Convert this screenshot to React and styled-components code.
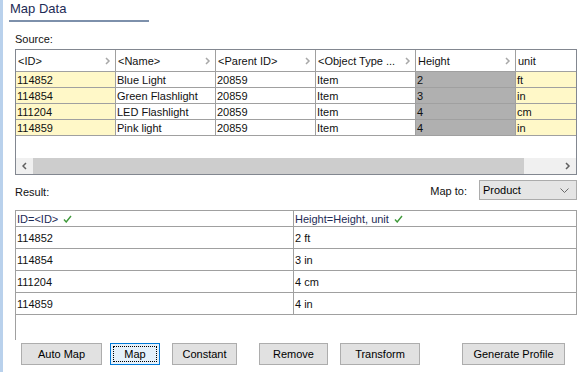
import { Fragment } from "react";
import styled, { createGlobalStyle } from "styled-components";

const GlobalStyle = createGlobalStyle`
  html, body {
    margin: 0;
    padding: 0;
    background: #ffffff;
  }
  body {
    font-family: "Liberation Sans", Arial, sans-serif;
    font-size: 11px;
    color: #000;
  }
`;

const Page = styled.div`
  display: flex;
  width: 578px;
  height: 372px;
  overflow: hidden;
`;

const Strip = styled.div`
  width: 3px;
  background: #b9d1ec;
  flex-shrink: 0;
`;

const Main = styled.div`
  flex: 1;
  display: flex;
  flex-direction: column;
  padding: 0 1px 0 6px;
  min-width: 0;
`;

const Title = styled.div`
  width: 140px;
  height: 22px;
  line-height: 18px;
  font-size: 13px;
  color: #1d2b55;
  border-bottom: 2px solid #7d90ab;
  padding-left: 1px;
  box-sizing: border-box;
`;

const Body = styled.div`
  display: flex;
  flex-direction: column;
  padding-left: 6px;
`;

const Label = styled.div`
  height: 16px;
  line-height: 16px;
  margin-top: ${(p) => p.$mt || 0}px;
  color: #111;
`;

const SourceGrid = styled.div`
  margin-top: 2px;
  border: 1px solid #828790;
  height: 126px;
  box-sizing: border-box;
  display: flex;
  flex-direction: column;
  overflow: hidden;
`;

const Row = styled.div`
  display: grid;
  grid-template-columns: repeat(5, 100px) 1fr;
  height: ${(p) => p.$h}px;
  flex-shrink: 0;
`;

const HeadCell = styled.div`
  display: flex;
  align-items: center;
  justify-content: space-between;
  padding: 0 4px 0 2px;
  border-right: 1px solid #a0a0a0;
  border-bottom: 1px solid #a0a0a0;
  white-space: nowrap;
  overflow: hidden;
  color: #111;
  &:last-child {
    border-right: none;
  }
`;

const Cell = styled.div`
  display: flex;
  align-items: center;
  padding-left: 1px;
  background: ${(p) => p.$bg || "#ffffff"};
  border-right: 1px solid #a0a0a0;
  border-bottom: 1px solid #a0a0a0;
  white-space: nowrap;
  overflow: hidden;
  color: #111;
  &:last-child {
    border-right: none;
  }
`;

const Filler = styled.div`
  flex: 1;
`;

const ScrollBar = styled.div`
  height: 16px;
  display: flex;
  background: #f0f0f0;
  flex-shrink: 0;
`;

const ScrollArrow = styled.div`
  width: 17px;
  display: flex;
  align-items: center;
  justify-content: center;
`;

const Thumb = styled.div`
  width: 491px;
  background: #cdcdcd;
`;

const Track = styled.div`
  flex: 1;
`;

const ResultBar = styled.div`
  display: flex;
  align-items: center;
  height: 20px;
  margin-top: 5px;
`;

const Spacer = styled.div`
  flex: 1;
`;

const MapLabel = styled.span`
  margin-right: 12px;
  padding-top: 1px;
  color: #111;
`;

const Select = styled.div`
  width: 98px;
  height: 20px;
  box-sizing: border-box;
  background: #e5e5e5;
  border: 1px solid #acacac;
  display: flex;
  align-items: center;
  justify-content: space-between;
  padding: 0 7px 0 3px;
  color: #000;
`;

const ResultArea = styled.div`
  margin-top: 10px;
  height: 130px;
  border-left: 1px solid #a0a0a0;
`;

const ResultTable = styled.div`
  display: grid;
  grid-template-columns: 278px 1fr;
  grid-template-rows: 16px repeat(4, 22px);
  border-top: 1px solid #a0a0a0;
  border-right: 1px solid #a0a0a0;
`;

const ResultCell = styled.div`
  display: flex;
  align-items: center;
  gap: 5px;
  padding-left: 1px;
  border-bottom: 1px solid #a0a0a0;
  border-right: ${(p) => (p.$first ? "1px solid #a0a0a0" : "none")};
  color: ${(p) => (p.$head ? "#1d2b55" : "#111")};
  white-space: nowrap;
`;

const ButtonRow = styled.div`
  display: flex;
  margin-top: 3px;
  padding-left: 6px;
`;

const Button = styled.div`
  width: ${(p) => p.$w}px;
  margin-left: ${(p) => p.$ml || 0}px;
  height: 22px;
  box-sizing: border-box;
  display: flex;
  align-items: center;
  justify-content: center;
  background: ${(p) => (p.$focus ? "#e5f1fb" : "#e1e1e1")};
  border: 1px solid ${(p) => (p.$focus ? "#0078d7" : "#adadad")};
  outline: ${(p) => (p.$focus ? "1px dotted #000" : "none")};
  outline-offset: -4px;
  color: #000;
`;

const Chevron = ({ dir = "right", color = "#a8a8a8" }) => {
  const d = {
    right: "M1 1 L4 4 L1 7",
    left: "M4 1 L1 4 L4 7",
  }[dir];
  return (
    <svg width="6" height="8" viewBox="0 0 6 8">
      <path d={d} fill="none" stroke={color} strokeWidth="1.5" />
    </svg>
  );
};

const DownChevron = () => (
  <svg width="9" height="5" viewBox="0 0 9 5">
    <path d="M0.5 0.5 L4.5 4.5 L8.5 0.5" fill="none" stroke="#6a6a6a" strokeWidth="1" />
  </svg>
);

const Check = () => (
  <svg width="9" height="8" viewBox="0 0 9 8">
    <path d="M1 4.5 L3.2 7 L8 1" fill="none" stroke="#3f9a3a" strokeWidth="1.4" />
  </svg>
);

const YELLOW = "#fff8c8";
const GRAY = "#b0b0b0";

const headers = ["<ID>", "<Name>", "<Parent ID>", "<Object Type ...", "Height", "unit"];

const rows = [
  ["114852", "Blue Light", "20859", "Item", "2", "ft"],
  ["114854", "Green Flashlight", "20859", "Item", "3", "in"],
  ["111204", "LED Flashlight", "20859", "Item", "4", "cm"],
  ["114859", "Pink light", "20859", "Item", "4", "in"],
];

const colBg = [YELLOW, null, null, null, GRAY, YELLOW];

const results = [
  ["114852", "2 ft"],
  ["114854", "3 in"],
  ["111204", "4 cm"],
  ["114859", "4 in"],
];

const buttons = [
  { label: "Auto Map", w: 81 },
  { label: "Map", w: 50, ml: 8, focus: true },
  { label: "Constant", w: 65, ml: 12 },
  { label: "Remove", w: 69, ml: 22 },
  { label: "Transform", w: 80, ml: 12 },
  { label: "Generate Profile", w: 103, ml: 42 },
];

const App = () => {
  return (
    <>
      <GlobalStyle />
      <Page>
        <Strip />
        <Main>
          <Title>Map Data</Title>
          <Body>
            <Label $mt={9}>Source:</Label>
            <SourceGrid>
              <Row $h={22}>
                {headers.map((h, i) => (
                  <HeadCell key={h}>
                    <span>{h}</span>
                    {i < 5 && <Chevron />}
                  </HeadCell>
                ))}
              </Row>
              {rows.map((r) => (
                <Row $h={16} key={r[0] + r[1]}>
                  {r.map((v, i) => (
                    <Cell key={i} $bg={colBg[i]}>
                      {v}
                    </Cell>
                  ))}
                </Row>
              ))}
              <Filler />
              <ScrollBar>
                <ScrollArrow>
                  <Chevron dir="left" color="#606060" />
                </ScrollArrow>
                <Thumb />
                <Track />
                <ScrollArrow>
                  <Chevron dir="right" color="#606060" />
                </ScrollArrow>
              </ScrollBar>
            </SourceGrid>

            <ResultBar>
              <Label $mt={4}>Result:</Label>
              <Spacer />
              <MapLabel>Map to:</MapLabel>
              <Select>
                <span>Product</span>
                <DownChevron />
              </Select>
            </ResultBar>

            <ResultArea>
              <ResultTable>
                <ResultCell $first $head>
                  ID=&lt;ID&gt; <Check />
                </ResultCell>
                <ResultCell $head>
                  Height=Height, unit <Check />
                </ResultCell>
                {results.map((r) => (
                  <Fragment key={r[0] + r[1]}>
                    <ResultCell $first>{r[0]}</ResultCell>
                    <ResultCell>{r[1]}</ResultCell>
                  </Fragment>
                ))}
              </ResultTable>
            </ResultArea>

            <ButtonRow>
              {buttons.map((b) => (
                <Button key={b.label} $w={b.w} $ml={b.ml} $focus={b.focus}>
                  {b.label}
                </Button>
              ))}
            </ButtonRow>
          </Body>
        </Main>
      </Page>
    </>
  );
};

export default App;
